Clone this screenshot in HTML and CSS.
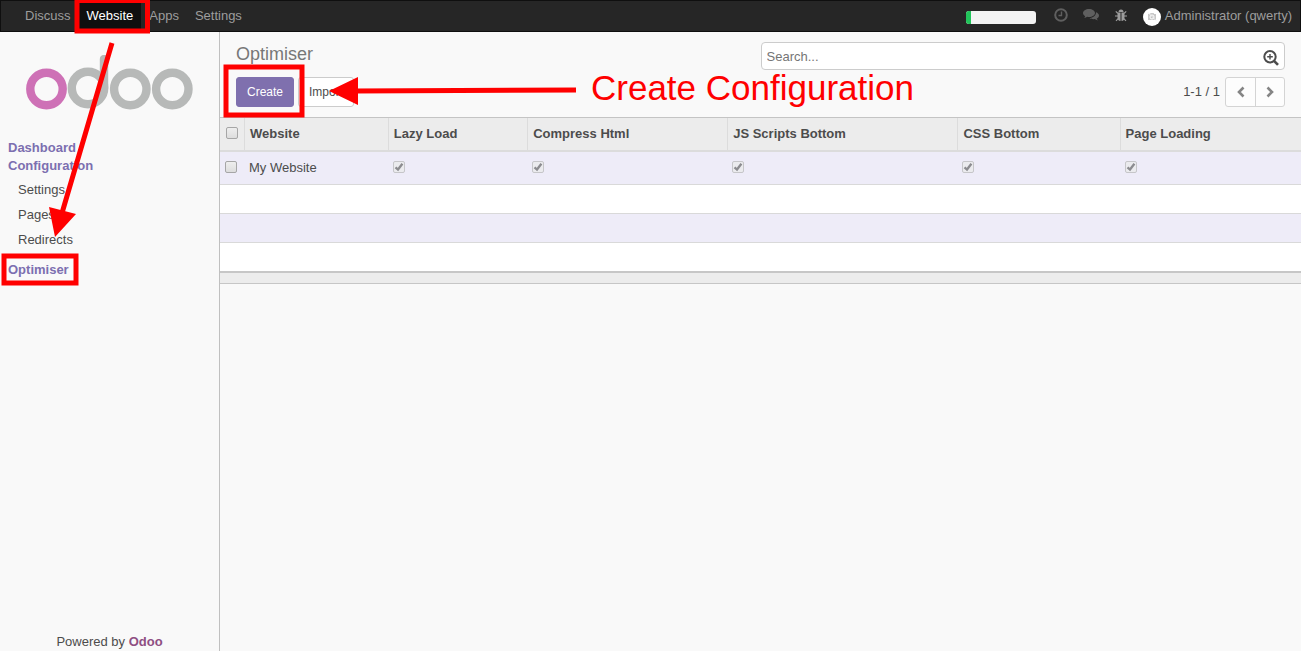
FILE: index.html
```html
<!DOCTYPE html>
<html lang="en">
<head>
<meta charset="utf-8">
<title>Optimiser - Odoo</title>
<link rel="stylesheet" href="styles.css">
</head>
<body>
<header class="navbar">
  <nav class="menu">
    <a href="#">Discuss</a>
    <a href="#" class="active">Website</a>
    <a href="#">Apps</a>
    <a href="#">Settings</a>
  </nav>
  <div class="systray">
    <div class="progress"><div class="progress-bar"></div></div>
    <button class="tray-btn" aria-label="Activities">
      <svg width="14" height="14" viewBox="0 0 14 14" fill="none" stroke="currentColor"><circle cx="7" cy="7" r="5.8" stroke-width="2"/><path d="M7.500 3.500v4H4.500" stroke-width="1.400"/></svg>
    </button>
    <button class="tray-btn" aria-label="Conversations">
      <svg width="16" height="14" viewBox="0 0 16 14" fill="currentColor"><path d="M6 1C2.700 1 0 2.800 0 5c0 1.300.8 2.400 2.200 3.200-.2.700-.6 1.200-1.100 1.800 1.300-.1 2.300-.6 3.100-1.200.6.100 1.200.2 1.800.2 3.300 0 6-1.800 6-4S9.300 1 6 1z"/><path d="M13 4.200c.2 3.300-3 5.700-6.500 5.800 1 .8 2.600 1.300 4.200 1.200l1-.1c.9.700 1.900 1.200 3.200 1.300-.5-.6-.9-1.100-1.100-1.800C15.200 9.800 16 8.800 16 7.500c0-1.400-1.200-2.600-3-3.300z"/></svg>
    </button>
    <button class="tray-btn bug" aria-label="Developer tools">
      <svg width="12" height="13" viewBox="0 0 12 13"><g fill="currentColor"><path d="M3.500 3a2.500 2.500 0 0 1 5 0z"/><path d="M2.500 3.600h3V12C3.500 12 2.500 10.500 2.500 8zM6.500 3.600h3V8c0 2.500-1 4-3 4z"/></g><path d="M.8 2.300l2 2M11.200 2.300l-2 2M0 7h3M9 7h3M1 11.800l2.400-2.400M11 11.800L8.600 9.400" stroke="currentColor" stroke-width="1.200"/></svg>
    </button>
    <a href="#" class="user">
      <svg width="18" height="18" viewBox="0 0 18 18"><circle cx="9" cy="9" r="9" fill="#fff"/><path d="M5 6h2l.6-1h3l.6 1H13v6H5z" fill="#c8c8c8"/><circle cx="9" cy="9" r="2" fill="#c0c0c0" stroke="#fff"/><path d="M5 4.500l8 8" stroke="#eee"/></svg>
      <span>Administrator (qwerty)</span>
    </a>
  </div>
</header>
<div class="app">
  <aside class="sidebar">
    <a href="#" class="logo" aria-label="Odoo">
      <svg width="167" height="55" viewBox="26 55 167 55" fill="none" stroke="#b7b9b8" stroke-width="8.400"><circle cx="46.500" cy="89" r="16.200" stroke="#ce71b6"/><circle cx="88" cy="88" r="16.200"/><path d="M104 88V59" stroke-linecap="round"/><circle cx="130.300" cy="89" r="16.200"/><circle cx="172.300" cy="89" r="16.200"/></svg>
    </a>
    <nav class="side-menu">
      <a href="#" class="section">Dashboard</a>
      <a href="#" class="section">Configuration</a>
      <div class="submenu">
        <a href="#">Settings</a>
        <a href="#">Pages</a>
        <a href="#">Redirects</a>
      </div>
      <a href="#" class="section">Optimiser</a>
    </nav>
    <footer class="powered">Powered by <a href="#">Odoo</a></footer>
  </aside>
  <main class="content">
    <section class="control-panel">
      <h1>Optimiser</h1>
      <div class="search">
        <input type="text" placeholder="Search..." aria-label="Search">
        <button aria-label="Advanced search">
          <svg width="16" height="16" viewBox="0 0 16 16" fill="none" stroke="currentColor"><circle cx="7" cy="6.800" r="5.700" stroke-width="2"/><path d="M11 10.800l4 4" stroke-width="2.600"/><path d="M7 4v5.600M4.200 6.800h5.600" stroke-width="1.400"/></svg>
        </button>
      </div>
      <div class="buttons">
        <button class="btn primary">Create</button>
        <button class="btn">Import</button>
      </div>
      <div class="pager">
        <span>1-1 / 1</span>
        <div class="pager-buttons">
          <button aria-label="Previous"><svg width="10" height="12" viewBox="0 0 10 12"><path d="M7.500 1.500L3 6l4.500 4.500"/></svg></button>
          <button aria-label="Next"><svg width="10" height="12" viewBox="0 0 10 12"><path d="M2.500 1.500L7 6l-4.500 4.500"/></svg></button>
        </div>
      </div>
    </section>
    <table class="list">
      <colgroup><col class="c-select"><col class="c-website"><col class="c-lazy"><col class="c-html"><col class="c-js"><col class="c-css"><col></colgroup>
      <thead>
        <tr><th><input type="checkbox" aria-label="Select all"></th><th>Website</th><th>Lazy Load</th><th>Compress Html</th><th>JS Scripts Bottom</th><th>CSS Bottom</th><th>Page Loading</th></tr>
      </thead>
      <tbody>
        <tr class="record"><td><input type="checkbox" aria-label="Select My Website"></td><td>My Website</td><td><input type="checkbox" checked disabled aria-label="Lazy Load"></td><td><input type="checkbox" checked disabled aria-label="Compress Html"></td><td><input type="checkbox" checked disabled aria-label="JS Scripts Bottom"></td><td><input type="checkbox" checked disabled aria-label="CSS Bottom"></td><td><input type="checkbox" checked disabled aria-label="Page Loading"></td></tr>
        <tr><td colspan="7"></td></tr>
        <tr><td colspan="7"></td></tr>
        <tr><td colspan="7"></td></tr>
      </tbody>
      <tfoot><tr><td colspan="7"></td></tr></tfoot>
    </table>
  </main>
</div>
<svg class="annotations" width="920" height="290" viewBox="0 0 920 290" aria-hidden="true">
  <g fill="none" stroke="red" stroke-width="5">
    <rect x="77" y="0.500" width="70.500" height="30.500"/>
    <rect x="226" y="67" width="76" height="48"/>
    <rect x="4" y="256" width="72" height="27"/>
    <path d="M112 43L62 213M576 90L355 91"/>
  </g>
  <path fill="red" d="M49 207l27 7-21 23zM358 77v28l-29-14z"/>
</svg>
<p class="annotation-label">Create Configuration</p>
</body>
</html>
```

FILE: styles.css
```css
* { box-sizing: border-box; }
body {
  margin: 0;
  min-height: 100vh;
  display: flex;
  flex-direction: column;
  font: 13px/18px "Liberation Sans", Arial, sans-serif;
  color: #4c4c4c;
  background: #f9f9f9;
}
a { color: inherit; text-decoration: none; }
button { font: inherit; color: inherit; cursor: pointer; }
svg { display: block; }

.navbar {
  display: flex;
  justify-content: space-between;
  height: 32px;
  padding: 0 8px 0 16px;
  background: #262626;
  border: 1px solid #0f0f0f;
  color: #9d9d9d;
}
.menu { display: flex; }
.menu a { padding: 6px 8px; }
.menu .active { background: #0f0f0f; color: #fff; }
.systray { display: flex; align-items: center; }
.progress {
  width: 70px;
  height: 13px;
  margin: 3px 18px 0 0;
  border-radius: 3px;
  overflow: hidden;
  background: #f3f3f3;
}
.progress-bar { width: 5px; height: 100%; background: #21c45a; }
.tray-btn {
  display: flex;
  justify-content: center;
  width: 16px;
  margin: 0 15px 2px 0;
  padding: 0;
  border: 0;
  background: none;
  color: #5f5f5f;
}
.tray-btn:first-of-type { width: 14px; }
.bug { width: 12px; margin-left: 1px; margin-right: 16px; color: #9d9d9d; }
.user { display: flex; gap: 4px; padding-top: 1px; }
.user svg { margin-top: 1px; }

.app { flex: 1; display: flex; }
.sidebar {
  width: 220px;
  flex: none;
  display: flex;
  flex-direction: column;
  border-right: 1px solid #c0c0c0;
}
.logo { display: flex; justify-content: center; padding: 23px 0 29px; }
.side-menu { display: flex; flex-direction: column; padding-left: 8px; }
.section { font-weight: bold; color: #7c6fb0; }
.submenu { display: flex; flex-direction: column; padding: 2px 0 9px 10px; }
.submenu a { line-height: 25px; }
.powered { margin-top: auto; text-align: center; }
.powered a { font-weight: bold; color: #8f4f82; }

.content { flex: 1; min-width: 0; }
.control-panel {
  display: grid;
  grid-template-columns: 1fr 1fr;
  row-gap: 7px;
  padding: 10px 16px;
  border-bottom: 1px solid #c4c4c4;
}
h1 { margin: 0; font-size: 18px; font-weight: normal; line-height: 24px; color: #777; }
.search {
  display: flex;
  align-items: center;
  height: 28px;
  padding: 1px 5px 0;
  border: 1px solid #ccc;
  border-radius: 4px;
  background: #fff;
}
.search input { flex: 1; min-width: 0; padding: 0; border: 0; outline: 0; background: none; font: inherit; }
.search input::placeholder { color: #757575; }
.search button { margin-top: 3px; padding: 0; border: 0; background: none; }
.buttons { display: flex; gap: 4px; }
.btn {
  height: 30px;
  padding: 0 10px;
  border: 1px solid #ccc;
  border-radius: 3px;
  background: #fff;
  font-size: 12px;
}
.primary { background: #7f70ae; border-color: #7f70ae; color: #fff; }
.pager { display: flex; justify-content: flex-end; align-items: center; gap: 5px; }
.pager-buttons { display: flex; border: 1px solid #d4d4d4; border-radius: 3px; background: #fdfdfd; }
.pager-buttons button {
  display: flex;
  align-items: center;
  justify-content: center;
  width: 29px;
  height: 28px;
  padding: 0;
  border: 0;
  background: none;
}
.pager-buttons button + button { border-left: 1px solid #d4d4d4; }
.pager-buttons path { fill: none; stroke: #858585; stroke-width: 2.6; }

.list { width: 100%; table-layout: fixed; border-collapse: separate; border-spacing: 0; }
.c-select { width: 25px; }
.c-website { width: 13.3%; }
.c-lazy { width: 12.9%; }
.c-html { width: 18.5%; }
.c-js { width: 21.3%; }
.c-css { width: 15%; }
.list th {
  height: 34px;
  padding: 0 5px;
  text-align: left;
  background: #ececec;
  border-right: 1px solid #dcdcdc;
  border-bottom: 2px solid #dcdcdc;
}
.list th:first-child { padding: 0 6px 2px; }
.list th:last-child { border-right: 0; }
.list td { height: 29px; padding: 0 4px; border-bottom: 1px solid #d9d9d9; background: #fff; }
.list .record td { height: 33px; }
.list td:first-child { padding-left: 5px; }
.list tbody tr:nth-child(odd) td { background: #eeecf8; }
.list tbody tr:last-child td { height: 28px; border: 0; }
.list tfoot td { height: 13px; background: #ececec; border-top: 2px solid #c6c6c6; border-bottom: 1px solid #c6c6c6; }
.list input {
  appearance: none;
  display: block;
  width: 12px;
  height: 12px;
  margin: 0;
  border: 1px solid #a6a6a6;
  border-radius: 2px;
  background: linear-gradient(#eee, #ddd);
}
.list td input { margin-bottom: 2px; }
.list input:checked {
  border-color: #c6c6c9;
  background: #ebebee url("data:image/svg+xml,%3Csvg xmlns='http://www.w3.org/2000/svg' viewBox='0 0 10 10'%3E%3Cpath d='M1.500 5.300L4 7.500 8.400 1.800' fill='none' stroke='%238c8c90' stroke-width='2.300'/%3E%3C/svg%3E") center / 10px 10px no-repeat;
}

.annotations { position: absolute; top: 0; left: 0; pointer-events: none; }
.annotation-label {
  position: absolute;
  top: 68px;
  left: 591px;
  margin: 0;
  font-size: 35px;
  line-height: 40px;
  color: red;
  white-space: nowrap;
}
```
